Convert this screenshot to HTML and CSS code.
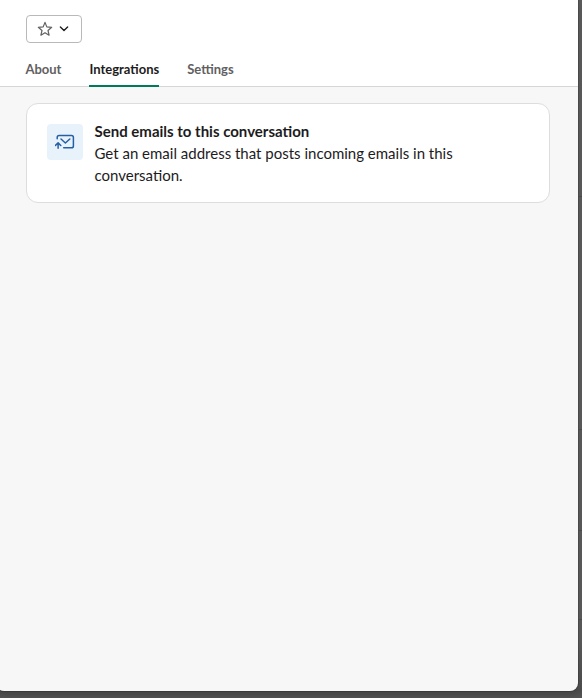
FILE: index.html
```html
<!DOCTYPE html>
<html lang="en">
<head>
<meta charset="utf-8">
<title>Conversation details</title>
<link rel="stylesheet" href="styles.css">
</head>
<body>
<main class="dialog">
  <header class="header">
    <button class="star-button" aria-label="Star conversation">
      <svg class="star" viewBox="0 0 16 16"><path d="M8 1.4 9.8 5.9 14.7 6.3 11 9.5 12.1 14.2 8 11.7 3.9 14.2 5 9.5 1.3 6.3 6.2 5.9Z"/></svg>
      <svg class="chevron" viewBox="0 0 10 6"><path d="M1.4 1.1 5 4.6 8.6 1.1"/></svg>
    </button>
    <nav class="tabs">
      <a class="tab">About</a>
      <a class="tab tab-active">Integrations</a>
      <a class="tab">Settings</a>
    </nav>
  </header>
  <section class="content">
    <article class="card">
      <div class="card-icon">
        <svg viewBox="0 0 20 20"><path d="M2.2 6.8V5.4Q2.2 3.5 4.1 3.5H16.5Q18.4 3.5 18.4 5.4V13.9Q18.4 15.8 16.5 15.8H8.7"/><path d="M6 7 10.4 11 14.8 7"/><path d="M3.1 16.2V11.2M.4 13.5 3.1 10.9 5.8 13.5"/></svg>
      </div>
      <div class="card-text">
        <h2>Send emails to this conversation</h2>
        <p>Get an email address that posts incoming emails in this conversation.</p>
      </div>
    </article>
  </section>
</main>
<aside class="backdrop"><i class="row row-a"></i><i class="row row-b"></i><i class="row row-c"></i><i class="row row-d"></i></aside>
</body>
</html>
```
FILE: styles.css
```css
* { box-sizing: border-box; }
body {
  display: flex;
  height: 698px;
  margin: 0;
  overflow: hidden;
  background: linear-gradient(#5b5b5b 0, #5b5b5b 640px, #4e4e4e 691px, #555 698px);
  color: #1d1c1d;
  font-family: Lato, "Liberation Sans", sans-serif;
}
.dialog {
  display: flex;
  flex-direction: column;
  flex: none;
  width: 582px;
  height: 691px;
  margin-left: -4px;
  overflow: hidden;
  border-radius: 0 0 8px 8px;
  background: #f7f7f7;
  box-shadow: 0 0 0 1px rgba(0, 0, 0, .15), 0 5px 10px rgba(0, 0, 0, .12);
}
.header {
  height: 87px;
  padding: 15px 30px 0;
  border-bottom: 1px solid #d6d6d6;
  background: #fff;
}
.star-button {
  display: flex;
  align-items: center;
  gap: 6px;
  width: 56px;
  height: 28px;
  padding: 0 0 0 10px;
  border: 1px solid #b9b9b9;
  border-radius: 4px;
  background: #fff;
}
svg { display: block; fill: none; stroke-linecap: round; stroke-linejoin: round; }
.star { width: 16px; height: 16px; stroke: #616061; stroke-width: 1.2; }
.chevron { width: 10px; height: 6px; stroke: #1d1c1d; stroke-width: 1.4; }
.tabs { display: flex; gap: 28px; margin: 11px 0 0 -.6px; }
.tab {
  height: 33px;
  color: #616061;
  font-size: 13px;
  font-weight: 700;
  line-height: 31px;
}
.tab-active { border-bottom: 2px solid #007a5a; color: #1d1c1d; }
.content { padding: 16px 28px 0 30px; }
.card {
  display: flex;
  gap: 11.5px;
  height: 100px;
  padding: 16px 20px 0;
  border: 1px solid #ddd;
  border-radius: 12px;
  background: #fff;
}
.card-icon {
  display: grid;
  place-items: center;
  flex: none;
  width: 36px;
  height: 36px;
  margin-top: 4px;
  border-radius: 4px;
  background: #e8f2fa;
}
.card-icon svg { width: 20px; height: 20px; stroke: #2560a5; stroke-width: 1.5; }
.card-text { width: 390px; font-size: 15px; line-height: 22px; }
.card-text h2, .card-text p { margin: 0; font-size: inherit; }
.backdrop { flex: 1; height: 691px; }
.row { display: block; height: 1px; background: #4a4a4a; }
.row-a { margin-top: 196px; }
.row-b { margin-top: 232px; }
.row-c { margin-top: 100px; }
.row-d { margin-top: 88px; }
```
